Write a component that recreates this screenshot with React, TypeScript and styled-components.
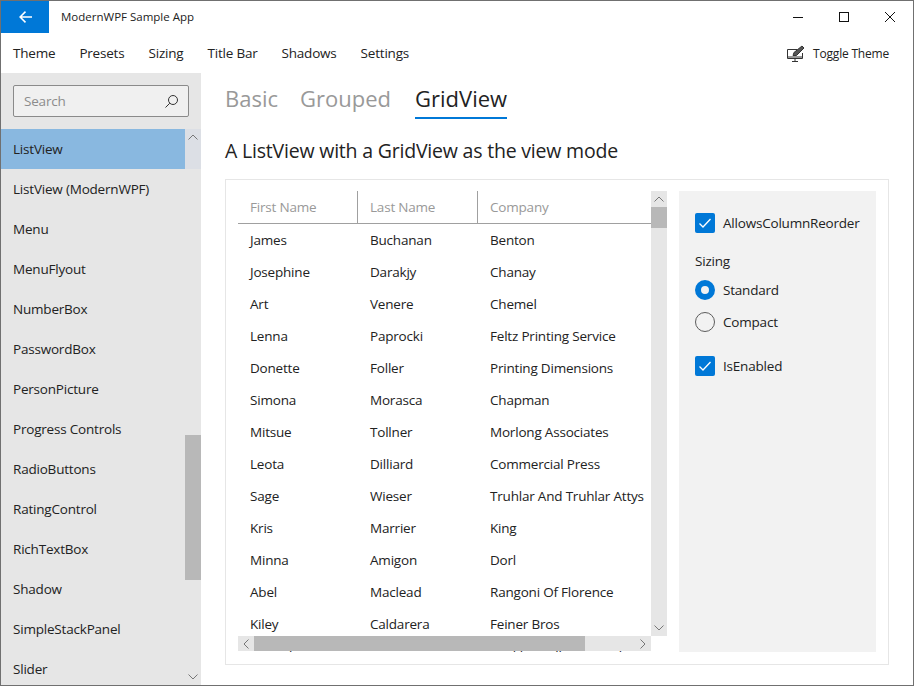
import * as React from "react";
import styled, { createGlobalStyle } from "styled-components";

const GlobalStyle = createGlobalStyle`
  html, body {
    margin: 0;
    padding: 0;
    background: #fff;
  }
  body {
    font-family: "Open Sans", "Noto Sans", sans-serif;
    font-size: 13.5px;
    letter-spacing: -0.2px;
    color: #222;
    overflow: hidden;
  }
`;

const Window = styled.div`
  width: 914px;
  height: 686px;
  box-sizing: border-box;
  border: 1px solid #707070;
  display: flex;
  flex-direction: column;
  overflow: hidden;
`;

const TitleBar = styled.header`
  height: 32px;
  flex: none;
  display: flex;
  align-items: stretch;
`;

const BackButton = styled.div`
  width: 48px;
  background: #0078d7;
  display: flex;
  align-items: center;
  justify-content: center;
`;

const AppName = styled.div`
  flex: 1;
  padding-left: 12px;
  font-size: 11.5px;
  letter-spacing: 0;
  line-height: 32px;
`;

const CaptionButton = styled.div`
  width: 46px;
  display: flex;
  align-items: center;
  justify-content: center;
`;

const MenuBar = styled.nav`
  height: 40px;
  flex: none;
  display: flex;
  align-items: center;
  padding-right: 24px;
`;

const MenuItem = styled.div`
  padding: 0 12px;
`;

const MenuSpacer = styled.div`
  flex: 1;
`;

const ToggleTheme = styled.div`
  display: flex;
  align-items: center;
  gap: 8px;
  font-size: 12px;
`;

const Body = styled.div`
  flex: 1;
  min-height: 0;
  display: flex;
`;

const Sidebar = styled.aside`
  width: 200px;
  flex: none;
  background: #e6e6e6;
  display: flex;
  flex-direction: column;
`;

const SearchBox = styled.div`
  flex: none;
  height: 32px;
  box-sizing: border-box;
  margin: 12px;
  border: 1px solid #8a8a8a;
  border-radius: 2px;
  background: #f0f0f0;
  display: flex;
  align-items: center;
  justify-content: space-between;
  padding: 0 10px;
  color: #8c8c8c;
`;

const NavArea = styled.div`
  flex: 1;
  min-height: 0;
  display: flex;
  overflow: hidden;
`;

const NavList = styled.div`
  flex: 1;
`;

const NavItem = styled.div<{ $selected?: boolean }>`
  height: 40px;
  line-height: 40px;
  padding-left: 12px;
  background: ${(p) => (p.$selected ? "#89b8e0" : "transparent")};
`;

const ScrollTrack = styled.div`
  width: 16px;
  flex: none;
  background: #e6e6e6;
  display: flex;
  flex-direction: column;
`;

const NavTrack = styled(ScrollTrack)`
  background: linear-gradient(#dcdfe5 40px, #e6e6e6 40px);
`;

const ScrollArrow = styled.div`
  flex: none;
  width: 16px;
  height: 16px;
  display: flex;
  align-items: center;
  justify-content: center;
`;

const ScrollSpace = styled.div<{ $size: number }>`
  flex: none;
  height: ${(p) => p.$size}px;
`;

const Thumb = styled.div<{ $size: number }>`
  flex: none;
  height: ${(p) => p.$size}px;
  background: #b8b8b8;
`;

const Main = styled.main`
  flex: 1;
  min-width: 0;
  padding: 0 24px;
  display: flex;
  flex-direction: column;
`;

const Tabs = styled.div`
  flex: none;
  display: flex;
  gap: 22px;
  height: 46px;
`;

const Tab = styled.div<{ $active?: boolean }>`
  height: 46px;
  box-sizing: border-box;
  font-size: 22px;
  letter-spacing: 0;
  line-height: 50px;
  color: ${(p) => (p.$active ? "#222" : "#999")};
  border-bottom: 2px solid ${(p) => (p.$active ? "#0078d7" : "transparent")};
  & + & + & {
    margin-left: 2px;
  }
`;

const Heading = styled.h2`
  flex: none;
  margin: 0;
  height: 60px;
  font-size: 19.5px;
  font-weight: 400;
  line-height: 64px;
`;

const Card = styled.section`
  flex: none;
  height: 486px;
  box-sizing: border-box;
  border: 1px solid #e6e6e6;
  padding: 11px 12px;
  display: flex;
  gap: 12px;
`;

const ListArea = styled.div`
  position: relative;
  width: 429px;
  height: 461px;
  flex: none;
  display: flex;
  align-items: flex-start;
`;

const Viewport = styled.div`
  width: 413px;
  height: 461px;
  flex: none;
  overflow: hidden;
`;

const VerticalTrack = styled(ScrollTrack)`
  height: 445px;
`;

const HeaderRow = styled.div`
  display: grid;
  grid-template-columns: 120px 120px 1fr;
  height: 33px;
  box-sizing: border-box;
  border-bottom: 1px solid #a0a0a0;
  color: #999;
`;

const HeaderCell = styled.div`
  padding-left: 12px;
  line-height: 32px;
  border-right: 1px solid #a0a0a0;
  &:last-child {
    border-right: none;
  }
`;

const Row = styled.div`
  display: grid;
  grid-template-columns: 120px 120px 1fr;
  height: 32px;
  line-height: 32px;
`;

const Cell = styled.div`
  padding-left: 12px;
  white-space: nowrap;
  overflow: hidden;
`;

// lies over the last rows of the list, one pixel of the row below still shows
const HScroll = styled.div`
  position: absolute;
  left: 0;
  top: 445px;
  width: 413px;
  height: 15px;
  display: flex;
  background: #e6e6e6;
`;

const HThumb = styled.div`
  width: 331px;
  flex: none;
  background: #b8b8b8;
`;

const HGap = styled.div`
  flex: 1;
`;

const Options = styled.aside`
  width: 197px;
  height: 461px;
  flex: none;
  box-sizing: border-box;
  background: #f2f2f2;
  padding: 22px 16px;
  display: flex;
  flex-direction: column;
`;

const CheckRow = styled.div`
  display: flex;
  align-items: center;
  gap: 8px;
  height: 20px;
  white-space: nowrap;
`;

const CheckBox = styled.div`
  width: 20px;
  height: 20px;
  flex: none;
  border-radius: 2px;
  background: #0078d7;
  display: flex;
  align-items: center;
  justify-content: center;
`;

const SizingLabel = styled.div`
  margin-top: 18px;
  margin-bottom: 9px;
  line-height: 20px;
`;

const RadioGroup = styled.div`
  display: flex;
  flex-direction: column;
  gap: 12px;
  margin-bottom: 24px;
`;

const Radio = styled.div<{ $checked?: boolean }>`
  width: 20px;
  height: 20px;
  flex: none;
  box-sizing: border-box;
  border-radius: 50%;
  border: ${(p) => (p.$checked ? "6px solid #0078d7" : "1px solid #5c5c5c")};
  background: #f2f2f2;
`;

const ChevronUp = () => (
  <svg width="10" height="6" viewBox="0 0 10 6" fill="none" stroke="#777" strokeWidth="1">
    <path d="M.5 5.5 5 1l4.5 4.5" />
  </svg>
);

const ChevronDown = () => (
  <svg width="10" height="6" viewBox="0 0 10 6" fill="none" stroke="#777" strokeWidth="1">
    <path d="M.5.5 5 5 9.5.5" />
  </svg>
);

const ChevronLeft = () => (
  <svg width="6" height="10" viewBox="0 0 6 10" fill="none" stroke="#777" strokeWidth="1">
    <path d="M5.5.5 1 5l4.5 4.5" />
  </svg>
);

const ChevronRight = () => (
  <svg width="6" height="10" viewBox="0 0 6 10" fill="none" stroke="#777" strokeWidth="1">
    <path d="M.5.5 5 5 .5 9.5" />
  </svg>
);

const Tick = () => (
  <svg width="14" height="12" viewBox="0 0 14 12" fill="none" stroke="#fff" strokeWidth="1.3">
    <path d="m1.5 6.5 3.5 3.5 7.5-8" />
  </svg>
);

const people = [
  ["James", "Buchanan", "Benton"],
  ["Josephine", "Darakjy", "Chanay"],
  ["Art", "Venere", "Chemel"],
  ["Lenna", "Paprocki", "Feltz Printing Service"],
  ["Donette", "Foller", "Printing Dimensions"],
  ["Simona", "Morasca", "Chapman"],
  ["Mitsue", "Tollner", "Morlong Associates"],
  ["Leota", "Dilliard", "Commercial Press"],
  ["Sage", "Wieser", "Truhlar And Truhlar Attys"],
  ["Kris", "Marrier", "King"],
  ["Minna", "Amigon", "Dorl"],
  ["Abel", "Maclead", "Rangoni Of Florence"],
  ["Kiley", "Caldarera", "Feiner Bros"],
  ["Graciela", "Ruta", "Buckley Miller & Wright"],
];

const navItems = [
  "ListView",
  "ListView (ModernWPF)",
  "Menu",
  "MenuFlyout",
  "NumberBox",
  "PasswordBox",
  "PersonPicture",
  "Progress Controls",
  "RadioButtons",
  "RatingControl",
  "RichTextBox",
  "Shadow",
  "SimpleStackPanel",
  "Slider",
];

const App = () => {
  return (
    <Window>
      <GlobalStyle />
      <TitleBar>
        <BackButton>
          <svg width="13" height="12" viewBox="0 0 13 12" fill="none" stroke="#fff" strokeWidth="1.5">
            <path d="M6.5.6 1.1 6l5.4 5.4M1.1 6H13" />
          </svg>
        </BackButton>
        <AppName>ModernWPF Sample App</AppName>
        <CaptionButton>
          <svg width="10" height="10" viewBox="0 0 10 10" stroke="#111" fill="none">
            <path d="M0 5.5h10" />
          </svg>
        </CaptionButton>
        <CaptionButton>
          <svg width="10" height="10" viewBox="0 0 10 10" stroke="#111" fill="none">
            <rect x=".5" y=".5" width="9" height="9" />
          </svg>
        </CaptionButton>
        <CaptionButton>
          <svg width="10" height="10" viewBox="0 0 10 10" stroke="#111" fill="none">
            <path d="m0 0 10 10M10 0 0 10" />
          </svg>
        </CaptionButton>
      </TitleBar>
      <MenuBar>
        <MenuItem>Theme</MenuItem>
        <MenuItem>Presets</MenuItem>
        <MenuItem>Sizing</MenuItem>
        <MenuItem>Title Bar</MenuItem>
        <MenuItem>Shadows</MenuItem>
        <MenuItem>Settings</MenuItem>
        <MenuSpacer />
        <ToggleTheme>
          <svg width="18" height="17" viewBox="0 0 18 17" fill="none" stroke="#333" strokeWidth="1">
            <path d="M10 4.5H.5v9h15V8" />
            <path d="M1 12h14" />
            <path d="M8 13.5v2.5M5 16.5h6" />
            <path d="m6 10.5 1-3 8-6.5 2 2-7.5 7.5-3.5 0Z" fill="#555" />
          </svg>
          Toggle Theme
        </ToggleTheme>
      </MenuBar>
      <Body>
        <Sidebar>
          <SearchBox>
            Search
            <svg width="13" height="13" viewBox="0 0 13 13" fill="none" stroke="#333" strokeWidth="1">
              <circle cx="8" cy="5" r="4.5" />
              <path d="M4.8 8.2.5 12.5" />
            </svg>
          </SearchBox>
          <NavArea>
            <NavList>
              {navItems.map((item, i) => (
                <NavItem key={item} $selected={i === 0}>
                  {item}
                </NavItem>
              ))}
            </NavList>
            <NavTrack>
              <ScrollArrow>
                <ChevronUp />
              </ScrollArrow>
              <ScrollSpace $size={290} />
              <Thumb $size={145} />
              <ScrollSpace $size={89} />
              <ScrollArrow>
                <ChevronDown />
              </ScrollArrow>
            </NavTrack>
          </NavArea>
        </Sidebar>
        <Main>
          <Tabs>
            <Tab>Basic</Tab>
            <Tab>Grouped</Tab>
            <Tab $active>GridView</Tab>
          </Tabs>
          <Heading>A ListView with a GridView as the view mode</Heading>
          <Card>
            <ListArea>
              <Viewport>
                <HeaderRow>
                  <HeaderCell>First Name</HeaderCell>
                  <HeaderCell>Last Name</HeaderCell>
                  <HeaderCell>Company</HeaderCell>
                </HeaderRow>
                {people.map((p) => (
                  <Row key={p[0]}>
                    <Cell>{p[0]}</Cell>
                    <Cell>{p[1]}</Cell>
                    <Cell>{p[2]}</Cell>
                  </Row>
                ))}
              </Viewport>
              <VerticalTrack>
                <ScrollArrow>
                  <ChevronUp />
                </ScrollArrow>
                <Thumb $size={21} />
                <ScrollSpace $size={392} />
                <ScrollArrow>
                  <ChevronDown />
                </ScrollArrow>
              </VerticalTrack>
              <HScroll>
                <ScrollArrow>
                  <ChevronLeft />
                </ScrollArrow>
                <HThumb />
                <HGap />
                <ScrollArrow>
                  <ChevronRight />
                </ScrollArrow>
              </HScroll>
            </ListArea>
            <Options>
              <CheckRow>
                <CheckBox>
                  <Tick />
                </CheckBox>
                AllowsColumnReorder
              </CheckRow>
              <SizingLabel>Sizing</SizingLabel>
              <RadioGroup>
                <CheckRow>
                  <Radio $checked />
                  Standard
                </CheckRow>
                <CheckRow>
                  <Radio />
                  Compact
                </CheckRow>
              </RadioGroup>
              <CheckRow>
                <CheckBox>
                  <Tick />
                </CheckBox>
                IsEnabled
              </CheckRow>
            </Options>
          </Card>
        </Main>
      </Body>
    </Window>
  );
};

export default App;
